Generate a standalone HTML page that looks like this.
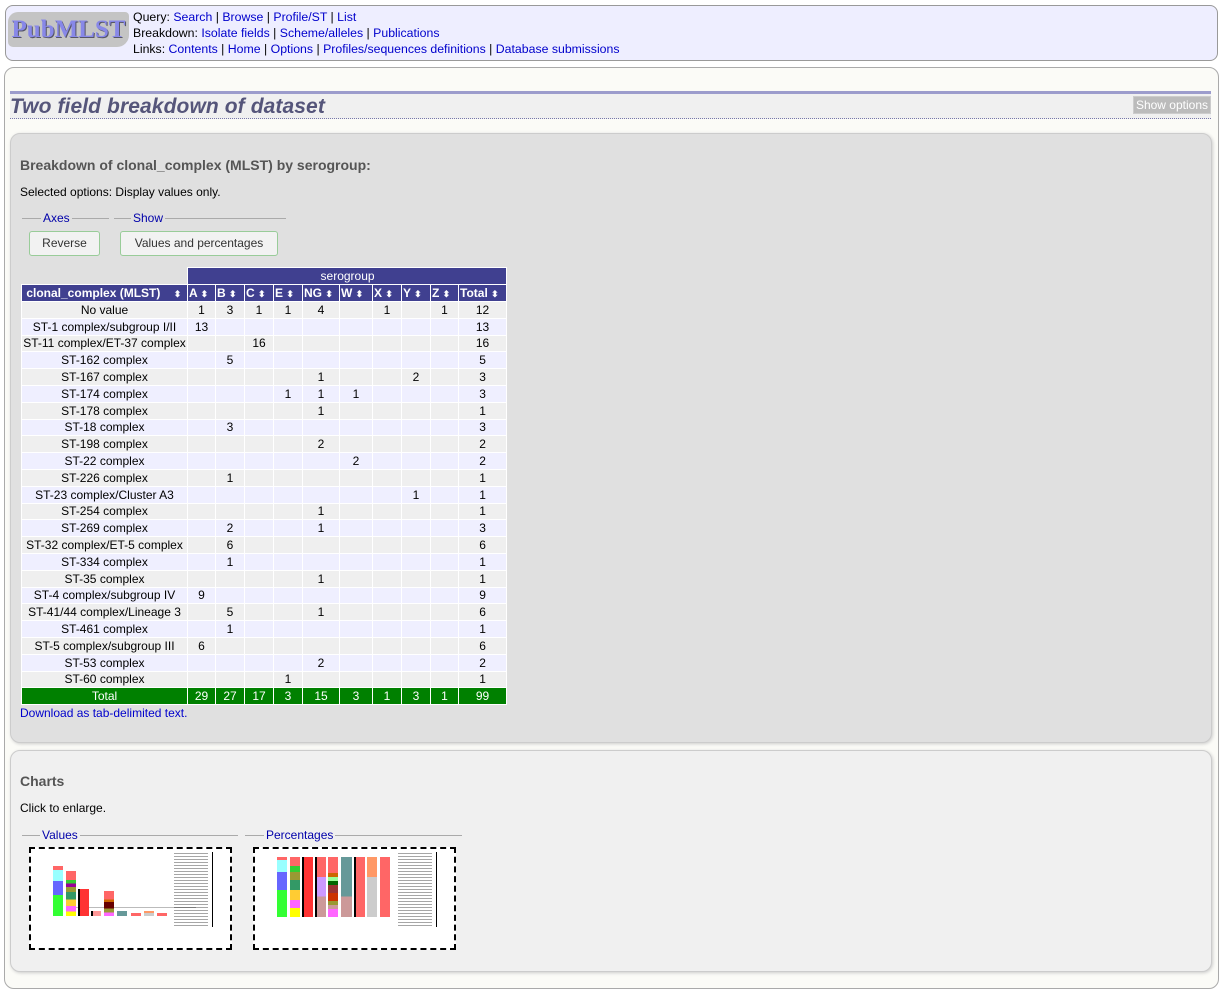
<!DOCTYPE html>
<html><head><meta charset="utf-8"><style>
*{box-sizing:border-box}
body{margin:0;width:1222px;height:990px;background:#fff;font-family:"Liberation Sans",Arial,sans-serif;font-size:12px;color:#000;position:relative;overflow:hidden}
a{color:#00c;text-decoration:none}
.abs{position:absolute}
#hdr{left:5px;top:5px;width:1213px;height:56px;background:#eeeeff;border:1px solid #999;border-radius:8px}
#logo{left:8px;top:12px;width:121px;height:35px;background:#c4c4c4;border-radius:10px 4px 12px 5px;font-family:"Liberation Serif",serif;font-weight:bold;font-size:25px;color:#8888e8;text-align:center;line-height:35px;text-shadow:1px 1px 0 #556}
#links{left:133px;top:9px;line-height:16px;font-size:12.3px}
#main{left:4px;top:67px;width:1215px;height:922px;background:#fbfbf7;border:1px solid #aaa;border-radius:10px}
#tbar{left:10px;top:91px;width:1201px;height:28px;background:#f0f0f0;border-top:3px solid #9c9ccc;border-bottom:1px dotted #77a}
#tbar h1{margin:0;font-size:21px;font-style:italic;font-weight:bold;color:#55557a;position:absolute;left:0;top:1px;letter-spacing:0.1px}
#showopt{right:0;top:2px;background:#bbb;color:#fff;font-size:12px;padding:1px 2px;border:1px solid #ccc}
.panel{border:1px solid #ccc;border-radius:10px;box-shadow:1px 1px 3px #ccc}
#p1{left:10px;top:133px;width:1202px;height:610px;background:#e0e0e0}
#p2{left:10px;top:750px;width:1202px;height:222px;background:#f0f0f0}
h2{margin:0;font-size:14px;font-weight:bold;color:#555;position:absolute}
.leg{position:absolute;height:1px;background:#aaa}
.lt{position:absolute;color:#00a;font-size:12px;background:#e0e0e0;padding:0 2px}
.btn{position:absolute;height:25px;border:1px solid #9c9;border-radius:3px;background:#f2f2f2;color:#333;text-align:center;line-height:23px;font-size:12px}
table{position:absolute;left:21px;top:267px;border-collapse:collapse;font-size:12px;width:485px;table-layout:fixed}
td,th{padding:0;border:1px solid #fff;height:16.8px;line-height:14px;text-align:center;white-space:nowrap;overflow:hidden}
th{background:#404090;color:#fff;font-weight:bold;text-align:left;padding-left:1px;height:17px}
tr.o td{background:#efefef}tr.e td{background:#efefff}
tr.t td{background:#008000;color:#fff}
.ar{font-size:9px}
.ch{position:absolute;width:203px;height:103px;border:2px dashed #000;background:#fff}
.b{position:absolute}
</style></head><body>
<div id="hdr" class="abs"></div>
<div id="logo" class="abs">PubMLST</div>
<div id="links" class="abs">Query: <a>Search</a> | <a>Browse</a> | <a>Profile/ST</a> | <a>List</a><br>Breakdown: <a>Isolate fields</a> | <a>Scheme/alleles</a> | <a>Publications</a><br>Links: <a>Contents</a> | <a>Home</a> | <a>Options</a> | <a>Profiles/sequences definitions</a> | <a>Database submissions</a></div>
<div id="main" class="abs"></div>
<div id="tbar" class="abs"><h1>Two field breakdown of dataset</h1><div id="showopt" class="abs">Show options</div></div>
<div id="p1" class="abs panel"></div>
<h2 style="left:20px;top:157px">Breakdown of clonal_complex (MLST) by serogroup:</h2>
<div class="abs" style="left:20px;top:185px">Selected options: Display values only.</div>
<div class="leg" style="left:22px;top:218px;width:87px"></div><span class="lt" style="left:41px;top:211px">Axes</span>
<div class="leg" style="left:114px;top:218px;width:172px"></div><span class="lt" style="left:131px;top:211px">Show</span>
<div class="btn" style="left:29px;top:231px;width:71px">Reverse</div>
<div class="btn" style="left:120px;top:231px;width:158px">Values and percentages</div>
<table>
<colgroup><col style="width:166px"><col style="width:28px"><col style="width:29px"><col style="width:29px"><col style="width:29px"><col style="width:37px"><col style="width:33px"><col style="width:29px"><col style="width:29px"><col style="width:28px"><col style="width:48px"></colgroup>
<tr><td style="background:none;border:none;height:17px"></td><th colspan="10" style="text-align:center;font-weight:normal">serogroup</th></tr>
<tr><th>&nbsp;clonal_complex (MLST) &nbsp;&nbsp;&nbsp;<span class="ar">⬍</span></th><th>A <span class="ar">⬍</span></th><th>B <span class="ar">⬍</span></th><th>C <span class="ar">⬍</span></th><th>E <span class="ar">⬍</span></th><th>NG <span class="ar">⬍</span></th><th>W <span class="ar">⬍</span></th><th>X <span class="ar">⬍</span></th><th>Y <span class="ar">⬍</span></th><th>Z <span class="ar">⬍</span></th><th>Total <span class="ar">⬍</span></th></tr>
<tr class="o"><td>No value</td><td>1</td><td>3</td><td>1</td><td>1</td><td>4</td><td></td><td>1</td><td></td><td>1</td><td>12</td></tr>
<tr class="e"><td>ST-1 complex/subgroup I/II</td><td>13</td><td></td><td></td><td></td><td></td><td></td><td></td><td></td><td></td><td>13</td></tr>
<tr class="o"><td>ST-11 complex/ET-37 complex</td><td></td><td></td><td>16</td><td></td><td></td><td></td><td></td><td></td><td></td><td>16</td></tr>
<tr class="e"><td>ST-162 complex</td><td></td><td>5</td><td></td><td></td><td></td><td></td><td></td><td></td><td></td><td>5</td></tr>
<tr class="o"><td>ST-167 complex</td><td></td><td></td><td></td><td></td><td>1</td><td></td><td></td><td>2</td><td></td><td>3</td></tr>
<tr class="e"><td>ST-174 complex</td><td></td><td></td><td></td><td>1</td><td>1</td><td>1</td><td></td><td></td><td></td><td>3</td></tr>
<tr class="o"><td>ST-178 complex</td><td></td><td></td><td></td><td></td><td>1</td><td></td><td></td><td></td><td></td><td>1</td></tr>
<tr class="e"><td>ST-18 complex</td><td></td><td>3</td><td></td><td></td><td></td><td></td><td></td><td></td><td></td><td>3</td></tr>
<tr class="o"><td>ST-198 complex</td><td></td><td></td><td></td><td></td><td>2</td><td></td><td></td><td></td><td></td><td>2</td></tr>
<tr class="e"><td>ST-22 complex</td><td></td><td></td><td></td><td></td><td></td><td>2</td><td></td><td></td><td></td><td>2</td></tr>
<tr class="o"><td>ST-226 complex</td><td></td><td>1</td><td></td><td></td><td></td><td></td><td></td><td></td><td></td><td>1</td></tr>
<tr class="e"><td>ST-23 complex/Cluster A3</td><td></td><td></td><td></td><td></td><td></td><td></td><td></td><td>1</td><td></td><td>1</td></tr>
<tr class="o"><td>ST-254 complex</td><td></td><td></td><td></td><td></td><td>1</td><td></td><td></td><td></td><td></td><td>1</td></tr>
<tr class="e"><td>ST-269 complex</td><td></td><td>2</td><td></td><td></td><td>1</td><td></td><td></td><td></td><td></td><td>3</td></tr>
<tr class="o"><td>ST-32 complex/ET-5 complex</td><td></td><td>6</td><td></td><td></td><td></td><td></td><td></td><td></td><td></td><td>6</td></tr>
<tr class="e"><td>ST-334 complex</td><td></td><td>1</td><td></td><td></td><td></td><td></td><td></td><td></td><td></td><td>1</td></tr>
<tr class="o"><td>ST-35 complex</td><td></td><td></td><td></td><td></td><td>1</td><td></td><td></td><td></td><td></td><td>1</td></tr>
<tr class="e"><td>ST-4 complex/subgroup IV</td><td>9</td><td></td><td></td><td></td><td></td><td></td><td></td><td></td><td></td><td>9</td></tr>
<tr class="o"><td>ST-41/44 complex/Lineage 3</td><td></td><td>5</td><td></td><td></td><td>1</td><td></td><td></td><td></td><td></td><td>6</td></tr>
<tr class="e"><td>ST-461 complex</td><td></td><td>1</td><td></td><td></td><td></td><td></td><td></td><td></td><td></td><td>1</td></tr>
<tr class="o"><td>ST-5 complex/subgroup III</td><td>6</td><td></td><td></td><td></td><td></td><td></td><td></td><td></td><td></td><td>6</td></tr>
<tr class="e"><td>ST-53 complex</td><td></td><td></td><td></td><td></td><td>2</td><td></td><td></td><td></td><td></td><td>2</td></tr>
<tr class="o"><td>ST-60 complex</td><td></td><td></td><td></td><td>1</td><td></td><td></td><td></td><td></td><td></td><td>1</td></tr>
<tr class="t"><td>Total</td><td>29</td><td>27</td><td>17</td><td>3</td><td>15</td><td>3</td><td>1</td><td>3</td><td>1</td><td>99</td></tr>
</table>
<a class="abs" style="left:20px;top:706px">Download as tab-delimited text.</a>
<div id="p2" class="abs panel"></div>
<h2 style="left:20px;top:773px">Charts</h2>
<div class="abs" style="left:20px;top:801px">Click to enlarge.</div>
<div class="leg" style="left:22px;top:835px;width:216px"></div><span class="lt" style="left:40px;top:828px;background:#f0f0f0">Values</span>
<div class="leg" style="left:245px;top:835px;width:217px"></div><span class="lt" style="left:264px;top:828px;background:#f0f0f0">Percentages</span>
<div class="ch" style="left:29px;top:847px">
 <div class="b" style="left:45px;top:58px;width:120px;height:1px;background:#bbb"></div>
 <div class="b" style="left:22px;top:17px;width:10px;height:50px;background:linear-gradient(#f66 0 8%,#9ff 8% 30%,#66f 30% 58%,#3f3 58%)"></div>
 <div class="b" style="left:35px;top:22px;width:10px;height:45px;background:linear-gradient(#f66 0 20%,#3c3 20% 28%,#909 28% 36%,#993 36% 47%,#396 47% 63%,#fc3 63% 78%,#f6f 78% 90%,#ff0 90%)"></div>
 <div class="b" style="left:47px;top:40px;width:11px;height:27px;background:#f33;border-left:2px solid #000"></div>
 <div class="b" style="left:60px;top:62px;width:10px;height:5px;background:#f99;border-left:2px solid #000"></div>
 <div class="b" style="left:73px;top:42px;width:10px;height:25px;background:linear-gradient(#f66 0 35%,#c60 35% 45%,#600 45% 70%,#993 70% 85%,#f6f 85%)"></div>
 <div class="b" style="left:86px;top:62px;width:10px;height:5px;background:#699"></div>
 <div class="b" style="left:100px;top:64px;width:10px;height:3px;background:#f66"></div>
 <div class="b" style="left:113px;top:62px;width:10px;height:5px;background:linear-gradient(#f96 0 40%,#ccc 40%)"></div>
 <div class="b" style="left:126px;top:64px;width:10px;height:3px;background:#f66"></div>
 <div class="b" style="left:143px;top:4px;width:34px;height:74px;background:repeating-linear-gradient(#000 0 1px,#fff 1px 3px);opacity:.35"></div>
 <div class="b" style="left:181px;top:3px;width:1px;height:75px;background:#000"></div>
</div>
<div class="ch" style="left:253px;top:847px">
 <div class="b" style="left:22px;top:8px;width:10px;height:60px;background:linear-gradient(#f66 0 5%,#9ff 5% 25%,#66f 25% 55%,#3f3 55%)"></div>
 <div class="b" style="left:35px;top:8px;width:10px;height:60px;background:linear-gradient(#f66 0 15%,#3c3 15% 25%,#993 25% 38%,#396 38% 55%,#fc3 55% 72%,#f6f 72% 85%,#ff0 85%)"></div>
 <div class="b" style="left:47px;top:8px;width:11px;height:60px;background:#f33;border-left:2px solid #000"></div>
 <div class="b" style="left:60px;top:8px;width:11px;height:60px;background:linear-gradient(#f66 0 33%,#c9f 33% 66%,#c99 66%);border-left:2px solid #000"></div>
 <div class="b" style="left:73px;top:8px;width:10px;height:60px;background:linear-gradient(#f66 0 27%,#c60 27% 33%,#9f9 33% 40%,#060 40% 47%,#933 47% 60%,#c30 60% 73%,#993 73% 80%,#c99 80% 87%,#f6f 87%)"></div>
 <div class="b" style="left:86px;top:8px;width:11px;height:60px;background:linear-gradient(#699 0 66%,#c99 66%)"></div>
 <div class="b" style="left:99px;top:8px;width:11px;height:60px;background:#f66;border-left:2px solid #000"></div>
 <div class="b" style="left:112px;top:8px;width:10px;height:60px;background:linear-gradient(#f96 0 33%,#ccc 33%)"></div>
 <div class="b" style="left:125px;top:8px;width:10px;height:60px;background:#f66"></div>
 <div class="b" style="left:143px;top:4px;width:34px;height:74px;background:repeating-linear-gradient(#000 0 1px,#fff 1px 3px);opacity:.35"></div>
 <div class="b" style="left:181px;top:3px;width:1px;height:75px;background:#000"></div>
</div>
</body></html>
